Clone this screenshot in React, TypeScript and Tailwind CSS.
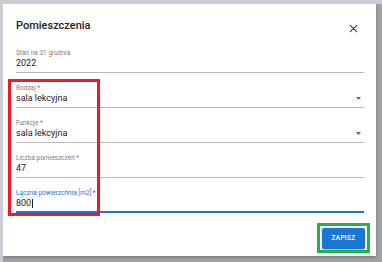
const fields = [
  { label: 'Stan na 31 grudnia', value: '2022', select: false, required: false },
  { label: 'Rodzaj', value: 'sala lekcyjna', select: true, required: true },
  { label: 'Funkcje', value: 'sala lekcyjna', select: true, required: true },
  { label: 'Liczba pomieszczeń', value: '47', select: false, required: true },
]

function CloseIcon() {
  return (
    <svg width="9" height="9" viewBox="0 0 10 10" className="text-[#444]">
      <path d="M1.5 1.5 L8.5 8.5 M8.5 1.5 L1.5 8.5" stroke="currentColor" strokeWidth="1.4" strokeLinecap="round" />
    </svg>
  )
}

function Field({ label, value, select, required }: { label: string; value: string; select: boolean; required: boolean }) {
  return (
    <div className="flex flex-col">
      <div className="text-[6.5px] leading-[8px] text-[#7d7d7d]">
        {label}
        {required && ' *'}
      </div>
      <div className="flex items-center justify-between text-[9px] leading-[12px] text-[#222] pb-[3px] border-b border-[#b8b8b8]">
        <span>{value}</span>
        {select && (
          <svg width="5" height="3" viewBox="0 0 5 3" className="mr-[3px]">
            <path d="M0 0 H5 L2.5 3 Z" fill="#666" />
          </svg>
        )}
      </div>
    </div>
  )
}

export default function App() {
  return (
    <div className="relative w-[382px] h-[262px] overflow-hidden bg-[#a2a2a2] border-t-[4px] border-l-[3px] border-[#c9cdd3] pr-[6px] font-['Roboto',sans-serif]">
      <div className="flex flex-col h-[252px] bg-white pl-[13px] pr-[12px] pt-[15px] pb-[7px] shadow-[0_1px_3px_rgba(0,0,0,0.3)]">
        <div className="flex items-center justify-between h-[14px]">
          <h1 className="text-[11px] leading-[14px] font-medium text-[#222]">Pomieszczenia</h1>
          <div className="mr-[6px] mt-[4px] flex">
            <CloseIcon />
          </div>
        </div>

        <div className="mt-[16px] flex flex-col gap-[11px]">
          {fields.map((f) => (
            <Field key={f.label} {...f} />
          ))}
          <div className="flex flex-col">
            <div className="text-[6.5px] leading-[8px] text-[#1976d2]">
              Łączna powierzchnia [m2] <span className="text-[#d32f2f]">*</span>
            </div>
            <div className="flex items-center text-[9px] leading-[12px] text-[#222] pb-[2px] border-b-2 border-[#1976d2]">
              <span>800</span>
              <span className="ml-[1px] w-[1px] h-[9px] bg-[#222]" />
            </div>
          </div>
        </div>

        <div className="mt-auto flex justify-end mr-[-1px]">
          <button className="w-[43px] h-[21px] rounded-[2px] bg-[#1976d2] text-white text-[6.5px] font-medium tracking-[0.3px] shadow-[0_1px_2px_rgba(0,0,0,0.35)]">
            ZAPISZ
          </button>
        </div>
      </div>

      <div className="absolute left-[5px] top-[75px] w-[92px] h-[137px] border-[3px] border-[#ed1c24]" />
      <div className="absolute left-[314px] top-[219px] w-[53px] h-[30px] border-[3px] border-[#22b14c]" />
    </div>
  )
}
